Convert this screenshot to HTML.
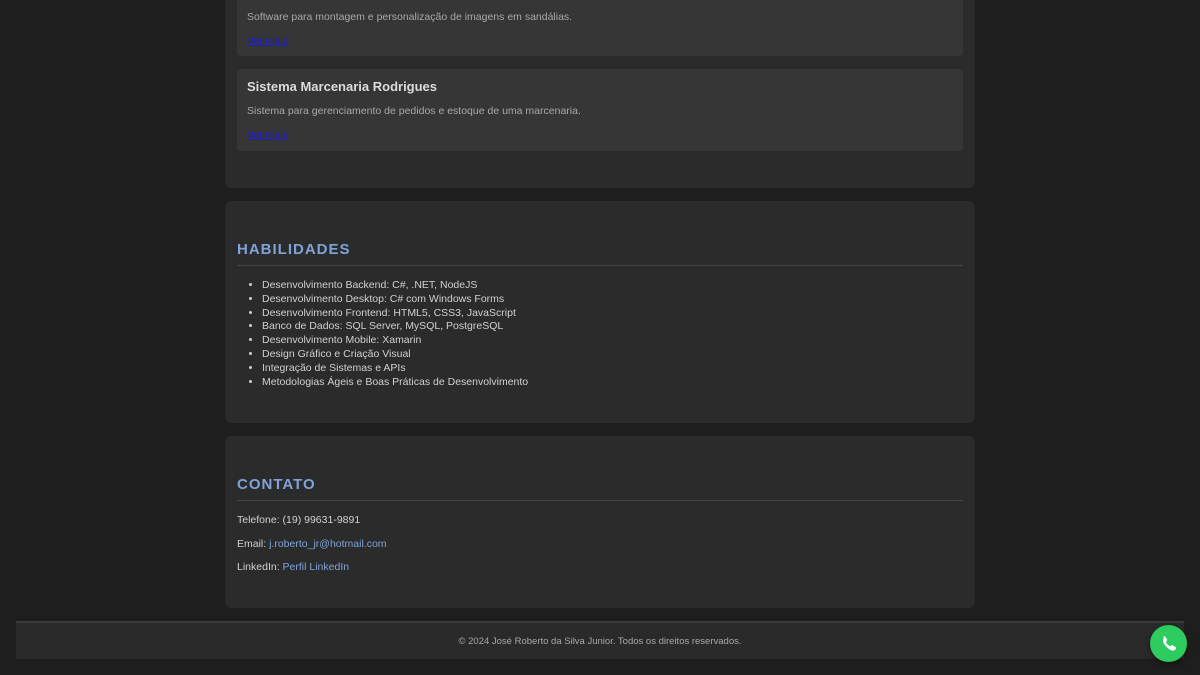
<!DOCTYPE html>
<html><head><meta charset="utf-8"><style>
*{margin:0;padding:0;box-sizing:border-box}
body{width:1200px;height:675px;overflow:hidden;background:#1e1e1e;font-family:"Liberation Sans","DejaVu Sans",sans-serif;color:#d8d8d8;position:relative}
.sec{position:absolute;left:225px;width:750px;background:#2b2b2b;border-radius:6px}
.card{position:absolute;left:237px;width:726px;background:#363636;border-radius:4px}
.card h3{position:absolute;left:10px;top:10px;font-size:13px;font-weight:bold;color:#dcdcdc}
.card p{position:absolute;left:10px;font-size:10.5px;color:#a8a8a8}
.card a{position:absolute;left:10px;font-size:10.5px;color:#1a1adb;text-decoration:underline}
h2{position:absolute;left:12px;font-size:15px;letter-spacing:1px;color:#7fa3d8;font-weight:bold}
.hr{position:absolute;left:12px;width:726px;height:1px;background:#444}
ul{position:absolute;left:37px;top:78px;font-size:10.5px;line-height:13.8px;color:#d0d0d0}
.c{position:absolute;left:12px;font-size:10.5px;color:#d0d0d0}
.c a{color:#7fa3d8;text-decoration:none}
</style></head><body>
<div class="sec" style="top:-10px;height:198px"></div>
<div class="card" style="top:-10px;height:66px"><p style="top:21px">Software para montagem e personalização de imagens em sandálias.</p><a style="top:45px">Ver mais</a></div>
<div class="card" style="top:69px;height:82px"><h3>Sistema Marcenaria Rodrigues</h3><p style="top:36px">Sistema para gerenciamento de pedidos e estoque de uma marcenaria.</p><a style="top:60px">Ver mais</a></div>
<div class="sec" style="top:201px;height:222px">
<h2 style="top:40px">HABILIDADES</h2><div class="hr" style="top:64px"></div>
<ul style="top:78px"><li>Desenvolvimento Backend: C#, .NET, NodeJS</li><li>Desenvolvimento Desktop: C# com Windows Forms</li><li>Desenvolvimento Frontend: HTML5, CSS3, JavaScript</li><li>Banco de Dados: SQL Server, MySQL, PostgreSQL</li><li>Desenvolvimento Mobile: Xamarin</li><li>Design Gráfico e Criação Visual</li><li>Integração de Sistemas e APIs</li><li>Metodologias Ágeis e Boas Práticas de Desenvolvimento</li></ul>
</div>
<div class="sec" style="top:436px;height:172px">
<h2 style="top:40px">CONTATO</h2><div class="hr" style="top:64px"></div>
<div class="c" style="top:78px">Telefone: (19) 99631-9891</div>
<div class="c" style="top:102px">Email: <a>j.roberto_jr@hotmail.com</a></div>
<div class="c" style="top:125px">LinkedIn: <a>Perfil LinkedIn</a></div>
</div>
<div style="position:absolute;left:16px;top:621px;width:1168px;height:38px;background:#2a2a2a;border-top:2px solid #3a3a3a;text-align:center;font-size:9.5px;color:#a8a8a8;line-height:38px">© 2024 José Roberto da Silva Junior. Todos os direitos reservados.</div>
<div style="position:absolute;left:1150px;top:625px;width:37px;height:37px;border-radius:50%;background:#2ecc5f;box-shadow:0 2px 6px rgba(0,0,0,.5)">
<svg width="37" height="37" viewBox="0 0 37 37"><path d="M13 12c1-1 2-1 2.5 0l1.5 2.5c.4.7 0 1.3-.6 1.8-.5.4-.4 1 0 1.6.9 1.3 1.8 2.2 3 3 .6.4 1.200.5 1.6 0 .5-.6 1.1-1 1.8-.6L25.3 22c1 .5 1 1.5 0 2.5-1.2 1.2-3 1.6-5 .4-2.8-1.6-5-3.800-6.6-6.6-1.2-2-.8-4 .3-5.3z" fill="#fff"/></svg></div>
</body></html>
